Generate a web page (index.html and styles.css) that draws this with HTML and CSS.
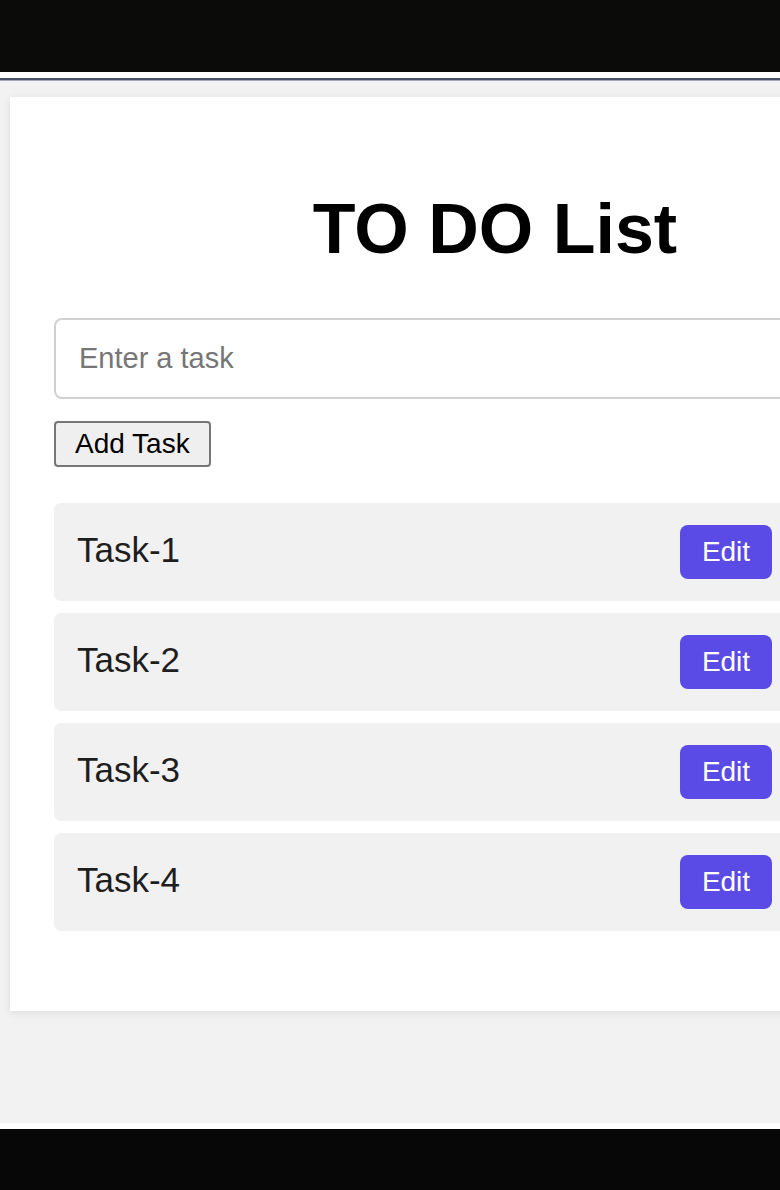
FILE: index.html
```html
<!DOCTYPE html>
<html lang="en">
<head>
<meta charset="utf-8">
<title>TO DO List</title>
<link rel="stylesheet" href="styles.css">
</head>
<body>
<div class="topbar"></div>
<div class="topstrip"></div>
<main class="page">
  <section class="card">
    <h1 class="title">TO DO List</h1>
    <input class="task-input" type="text" placeholder="Enter a task">
    <div class="add-row"><button class="add-btn" type="button">Add Task</button></div>
    <ul class="tasks">
      <li class="task"><span class="task-name">Task-1</span><button class="edit-btn" type="button">Edit</button></li>
      <li class="task"><span class="task-name">Task-2</span><button class="edit-btn" type="button">Edit</button></li>
      <li class="task"><span class="task-name">Task-3</span><button class="edit-btn" type="button">Edit</button></li>
      <li class="task"><span class="task-name">Task-4</span><button class="edit-btn" type="button">Edit</button></li>
    </ul>
  </section>
</main>
<div class="bottomstrip"></div>
<div class="bottombar"></div>
</body>
</html>
```

FILE: styles.css
```css
html, body {
  margin: 0;
  padding: 0;
  width: 780px;
  height: 1190px;
  overflow: hidden;
  background: #ffffff;
  font-family: "Liberation Sans", Arial, sans-serif;
}

.topbar {
  height: 72px;
  background: #0b0b0a;
}

.topstrip {
  height: 6px;
  background: #ffffff;
  border-bottom: 2px solid #4b5166;
}

.page {
  height: 1026px;
  padding: 17px 0 0 10px;
  background: #f2f2f2;
  box-shadow: inset 0 1px 0 #a6aab8;
}

.card {
  box-sizing: border-box;
  width: 970px;
  padding: 92px 44px 80px 44px;
  background: #ffffff;
  box-shadow: 0 2px 8px rgba(0, 0, 0, 0.09);
}

.title {
  margin: 0 0 49px 0;
  font-size: 70px;
  line-height: 80px;
  font-weight: 700;
  text-align: center;
  color: #000000;
}

.task-input {
  display: block;
  box-sizing: border-box;
  width: 100%;
  height: 81px;
  margin: 0;
  padding: 0 23px;
  border: 2px solid #d0d0d0;
  border-radius: 8px;
  font-family: "Liberation Sans", Arial, sans-serif;
  font-size: 29px;
  color: #222222;
  background: #ffffff;
  outline: none;
}

.task-input::placeholder {
  color: #767676;
}

.add-row {
  display: flex;
  margin-top: 22px;
}

.add-btn {
  box-sizing: border-box;
  height: 46px;
  padding: 0 19px;
  border: 2px solid #767676;
  border-radius: 4px;
  background: #efefef;
  font-family: "Liberation Sans", Arial, sans-serif;
  font-size: 28px;
  color: #000000;
}

.tasks {
  list-style: none;
  margin: 36px 0 0 0;
  padding: 0;
  display: flex;
  flex-direction: column;
  gap: 12px;
}

.task {
  box-sizing: border-box;
  height: 98px;
  display: flex;
  align-items: center;
  justify-content: space-between;
  padding: 0 164px 0 23px;
  background: #f1f1f1;
  border-radius: 7px;
}

.task-name {
  font-size: 35px;
  color: #1e1e1e;
  margin-top: -4px;
}

.edit-btn {
  box-sizing: border-box;
  width: 92px;
  height: 54px;
  padding: 0;
  border: none;
  border-radius: 8px;
  background: #5a4be6;
  font-family: "Liberation Sans", Arial, sans-serif;
  font-size: 28px;
  color: #ffffff;
}

.bottomstrip {
  height: 6px;
  background: #ffffff;
}

.bottombar {
  height: 61px;
  background: #070707;
}
```
